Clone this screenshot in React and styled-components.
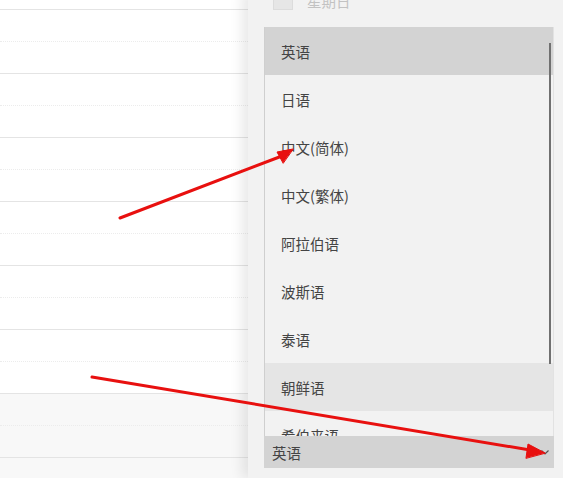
import styled, { createGlobalStyle } from "styled-components";

const GlobalStyle = createGlobalStyle`
  html, body {
    margin: 0;
    padding: 0;
    overflow: hidden;
    background: #fff;
  }
  body {
    font-family: "Noto Sans CJK SC", "Noto Sans", sans-serif;
  }
`;

const Page = styled.div`
  position: relative;
  display: flex;
  width: 563px;
  height: 478px;
  overflow: hidden;
`;

const Table = styled.div`
  flex: 0 0 248px;
  display: flex;
  flex-direction: column;
  margin-top: -22px;
`;

const Row = styled.div`
  flex: 0 0 32px;
  box-sizing: border-box;
  background: ${(p) => (p.$shaded ? "#f8f8f8" : "#fff")};
  border-bottom: 1px ${(p) => (p.$dotted ? "dotted #ececec" : "solid #e4e4e4")};
`;

const Panel = styled.div`
  flex: 1;
  position: relative;
  z-index: 1;
  background: #f2f2f2;
  box-shadow: -6px 0 12px rgba(0, 0, 0, 0.09);
  display: flex;
  flex-direction: column;
  padding: 0 9px 0 16px;
  margin-top: -10px;
`;

const CheckRow = styled.label`
  display: flex;
  align-items: center;
  gap: 14px;
  height: 20px;
  padding-left: 9px;
  color: #c2c2c2;
  font-size: 14.5px;
`;

const Box = styled.span`
  width: 20px;
  height: 20px;
  box-sizing: border-box;
  background: #e6e6e6;
  border: 1px solid #dcdcdc;
`;

const List = styled.div`
  position: relative;
  margin-top: 17px;
  height: 409px;
  overflow: hidden;
  box-sizing: border-box;
  border-left: 1px solid #cfcfcf;
  border-right: 1px solid #e2e2e2;
  background: #f2f2f2;
`;

const Item = styled.div`
  height: 48px;
  display: flex;
  align-items: center;
  padding-left: 16px;
  font-size: 14.5px;
  color: #444;
  background: ${(p) => (p.$selected ? "#d3d3d3" : p.$hover ? "#e5e5e5" : "transparent")};
`;

const Thumb = styled.div`
  position: absolute;
  right: 2px;
  top: 16px;
  width: 2px;
  height: 321px;
  background: #707070;
`;

const Select = styled.div`
  height: 32px;
  display: flex;
  align-items: center;
  justify-content: space-between;
  padding: 0 4px 0 8px;
  background: #d3d3d3;
  font-size: 14.5px;
  color: #444;
`;

const Arrows = styled.svg`
  position: absolute;
  inset: 0;
  z-index: 5;
  pointer-events: none;
`;

const languages = [
  "英语",
  "日语",
  "中文(简体)",
  "中文(繁体)",
  "阿拉伯语",
  "波斯语",
  "泰语",
  "朝鲜语",
  "希伯来语",
];

export default function App() {
  const rows = Array.from({ length: 17 });
  return (
    <>
      <GlobalStyle />
      <Page>
        <Table>
          {rows.map((_, i) => (
            <Row key={i} $dotted={i % 2 === 1} $shaded={i >= 13} />
          ))}
        </Table>
        <Panel>
          <CheckRow>
            <Box />
            星期日
          </CheckRow>
          <List>
            {languages.map((l, i) => (
              <Item key={l} $selected={i === 0} $hover={i === 7}>
                {l}
              </Item>
            ))}
            <Thumb />
          </List>
          <Select>
            英语
            <svg width="10" height="8" viewBox="0 0 10 8">
              <path d="M1.5 2.5 L5 6 L8.5 2.5" fill="none" stroke="#555" strokeWidth="1.2" />
            </svg>
          </Select>
        </Panel>
        <Arrows width="563" height="478" viewBox="0 0 563 478">
          <g stroke="#e8100f" strokeWidth="3" strokeLinecap="round" fill="#e8100f">
            <line x1="120" y1="218" x2="282" y2="156" />
            <polygon points="293,149 277,152 283,163" strokeWidth="1" strokeLinejoin="round" />
            <line x1="92" y1="377" x2="530" y2="450" />
            <polygon points="545,453 528,444 526,458" strokeWidth="1" strokeLinejoin="round" />
          </g>
        </Arrows>
      </Page>
    </>
  );
}
